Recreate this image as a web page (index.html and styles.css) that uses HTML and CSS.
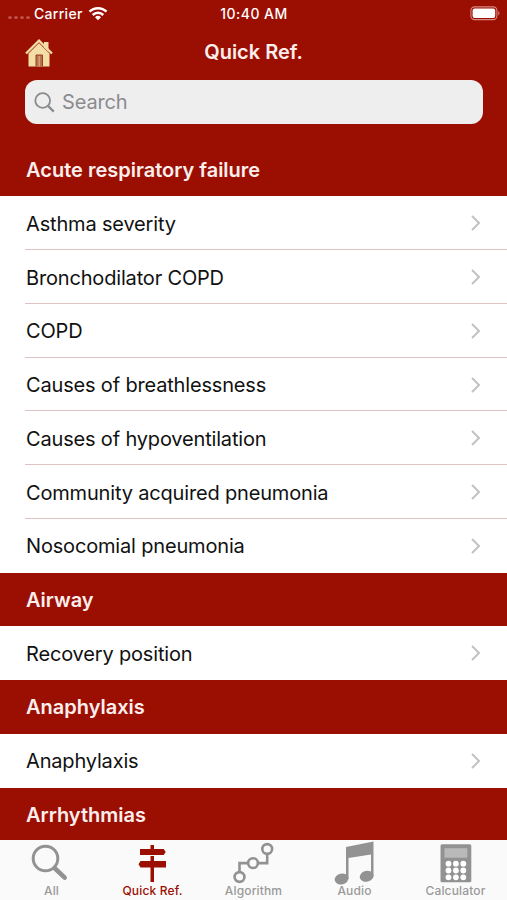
FILE: index.html
```
<!DOCTYPE html>
<html lang="en">
<head>
    <meta charset="UTF-8">
    <meta name="viewport" content="width=device-width, initial-scale=1.0">
    <title>Quick Ref.</title>
    <link rel="stylesheet" href="styles.css">
</head>
<body>

    <header>
        <div class="status">
            <div class="carrier">
                <span class="dots"><i></i><i></i><i></i><i></i></span>
                <span>Carrier</span>
                <svg width="20" height="15" viewBox="0 0 20 15" fill="none" stroke="#fff" stroke-width="2.5">
                    <path d="M1.5 5.7a12 12 0 0 1 17 0M4.7 9a7.5 7.5 0 0 1 10.6 0"/>
                    <path d="M10 14.2l-3-3a4.3 4.3 0 0 1 6 0z" fill="#fff" stroke="none"/>
                </svg>
            </div>
            <span class="time">10:40 AM</span>
            <svg class="battery" width="30" height="15" viewBox="0 0 30 15">
                <rect x=".9" y=".9" width="26" height="12.7" rx="3.6" fill="none" stroke="#d58a82" stroke-width="1.1"/>
                <rect x="2.6" y="2.5" width="22.6" height="9.5" rx="2" fill="#fff"/>
                <path d="M28.3 5v4.4c1.6-.7 1.6-3.7 0-4.4z" fill="#d58a82"/>
            </svg>
        </div>

        <div class="navbar">
            <svg class="home" width="28" height="29" viewBox="0 0 28 29">
                <path d="M19 3h4.500v10H19z" fill="#f3dfa5"/>
                <path d="M3.500 14L14 3l10.500 11v13.500h-21z" fill="#f3dfa5"/>
                <path d="M1 14.500L14 1.500l13 13" fill="none" stroke="#f3dfa5" stroke-width="2.200"/>
                <path d="M3.300 14.600L14 4l10.700 10.600" fill="none" stroke="#bd6b48" stroke-width="1"/>
                <path d="M11 27.500V16h6.500v11.500" fill="#b9734f" stroke="#9d3d20" stroke-width="1"/>
                <path d="M14.200 17v10.500" stroke="#e0b583" stroke-width="1"/>
            </svg>
            <h1>Quick Ref.</h1>
        </div>

        <div class="search">
            <svg width="21" height="21" viewBox="0 0 21 21" fill="none" stroke="#8b8b8e" stroke-width="1.800">
                <circle cx="8.700" cy="8.500" r="7.400"/>
                <path d="M13.800 13.600l6 6" stroke-width="2.200"/>
            </svg>
            <span>Search</span>
        </div>
    </header>

    <main>
        <h2>Acute respiratory failure</h2>
        <ul>
            <li><span>Asthma severity</span></li>
            <li><span>Bronchodilator COPD</span></li>
            <li><span>COPD</span></li>
            <li><span>Causes of breathlessness</span></li>
            <li><span>Causes of hypoventilation</span></li>
            <li><span>Community acquired pneumonia</span></li>
            <li><span>Nosocomial pneumonia</span></li>
        </ul>
        <h2>Airway</h2>
        <ul>
            <li><span>Recovery position</span></li>
        </ul>
        <h2>Anaphylaxis</h2>
        <ul>
            <li><span>Anaphylaxis</span></li>
        </ul>
        <h2>Arrhythmias</h2>
    </main>

    <nav>
        <a class="tab">
            <svg width="40" height="42" viewBox="0 0 40 42" fill="none" stroke="#929292">
                <circle cx="14.500" cy="18" r="12.300" stroke-width="3"/>
                <path d="M23.500 27.500l10.200 9.700" stroke-width="4.500" stroke-linecap="round"/>
            </svg>
            <span>All</span>
        </a>
        <a class="tab active">
            <svg width="40" height="42" viewBox="0 0 40 42" fill="#9b0e02">
                <path d="M18.500 4.500h3.500v4h9.700l2 3-2 3H8V8.500h10.500z"/>
                <path d="M18.500 15.500H22v5h12v6.500H22v14.500h-3.500V27H8.500l-2-3.200 2-3.300h10z"/>
            </svg>
            <span>Quick Ref.</span>
        </a>
        <a class="tab">
            <svg width="40" height="42" viewBox="0 0 40 42" fill="none" stroke="#929292" stroke-width="2.600">
                <circle cx="6.500" cy="36.500" r="4.900"/>
                <circle cx="20" cy="22.600" r="4.900"/>
                <circle cx="34.200" cy="8.500" r="4.900"/>
                <path d="M6.500 31.600v-9H15M25 22.600h9.200v-9"/>
            </svg>
            <span>Algorithm</span>
        </a>
        <a class="tab">
            <svg width="40" height="43" viewBox="0 0 40 43" fill="#929292">
                <path d="M12 7L39.500 1.500v35H37V14.500L14.500 18v21H12z"/>
                <ellipse cx="7.600" cy="39" rx="7" ry="5.400" transform="rotate(-15 7.600 39)"/>
                <ellipse cx="32.600" cy="36.300" rx="7" ry="5.400" transform="rotate(-15 32.600 36.300)"/>
            </svg>
            <span>Audio</span>
        </a>
        <a class="tab">
            <svg width="40" height="42" viewBox="0 0 40 42">
                <rect x="5.500" y="3.700" width="30.800" height="38" rx="1.500" fill="#929292"/>
                <rect x="9.500" y="7.700" width="22.800" height="9.500" fill="#b9b9b9"/>
                <g fill="#fff">
                    <circle cx="13.500" cy="23.200" r="2.900"/><circle cx="20.900" cy="23.200" r="2.900"/><circle cx="28.300" cy="23.200" r="2.900"/>
                    <circle cx="13.500" cy="30" r="2.900"/><circle cx="20.900" cy="30" r="2.900"/><circle cx="28.300" cy="30" r="2.900"/>
                    <circle cx="13.500" cy="36.800" r="2.900"/><circle cx="20.900" cy="36.800" r="2.900"/><circle cx="28.300" cy="36.800" r="2.900"/>
                </g>
            </svg>
            <span>Calculator</span>
        </a>
    </nav>

    <script>
        // add the disclosure arrow to each row
        document.querySelectorAll("li").forEach(function(row) {
            row.insertAdjacentHTML("beforeend", '<svg width="12" height="18" viewBox="0 0 12 18" fill="none" stroke="#c2c2c5" stroke-width="2"><path d="M2 2l7 7-7 7"/></svg>');
        });
    </script>

</body>
</html>
```
FILE: styles.css
```
* { box-sizing: border-box; }
body { margin: 0; height: 900px; overflow: hidden; display: flex; flex-direction: column; background: #fff; font-family: Inter, "Liberation Sans", sans-serif; }
svg { display: block; flex: none; overflow: visible; }
h1, h2, ul { margin: 0; padding: 0; }

header { flex: none; height: 142.5px; background: #9b0e02; color: #fff; }
.status { height: 26px; display: grid; grid-template-columns: 1fr auto 1fr; align-items: center; padding: 0 7px 0 8px; font-size: 14px; font-weight: 500; }
.carrier { display: flex; align-items: center; letter-spacing: .3px; }
.carrier svg { margin-left: 5px; }
.time { letter-spacing: .45px; }
.dots { display: flex; gap: 2px; margin: 8px 4px 0 0; }
.dots i { width: 4px; height: 3px; border-radius: 50%; background: #bd5148; }
.battery { justify-self: end; }
.navbar { height: 54px; display: grid; grid-template-columns: 1fr auto 1fr; align-items: center; padding: 0 25px; }
h1 { font-size: 20px; font-weight: 600; line-height: 50px; padding-bottom: 2px; color: #fbeeed; }
.search { display: flex; align-items: center; gap: 7px; width: 458px; height: 44px; margin-left: 25px; padding-left: 9px; border-radius: 12px; background: #eeeeef; color: #8b8b8e; font-size: 20px; letter-spacing: -.15px; }

main { flex: none; height: 697.5px; overflow: hidden; }
h2 { height: 53.75px; padding: 1px 0 0 26px; line-height: 53.75px; font-size: 20px; font-weight: 600; background: #9b0e02; color: #fbeeed; }
ul { list-style: none; }
li { height: 53.75px; margin-left: 25px; padding: 2.5px 25px 0 1px; display: flex; align-items: center; justify-content: space-between; border-bottom: 1px solid #dcc3c4; font-size: 20px; letter-spacing: -.17px; color: #111; }
li:last-child { border-bottom: 0; padding-top: 1.5px; }
li svg { margin-top: -1px; }

nav { flex: none; height: 60px; display: flex; justify-content: space-between; padding: 0 1px; background: #fafafa; }
.tab { width: 101px; display: flex; flex-direction: column; align-items: center; font-size: 12px; font-weight: 500; letter-spacing: .15px; color: #999; }
.tab svg { height: 43px; margin-right: 2px; }
.tab span { line-height: 16px; }
.active { color: #9b0e02; }
```
